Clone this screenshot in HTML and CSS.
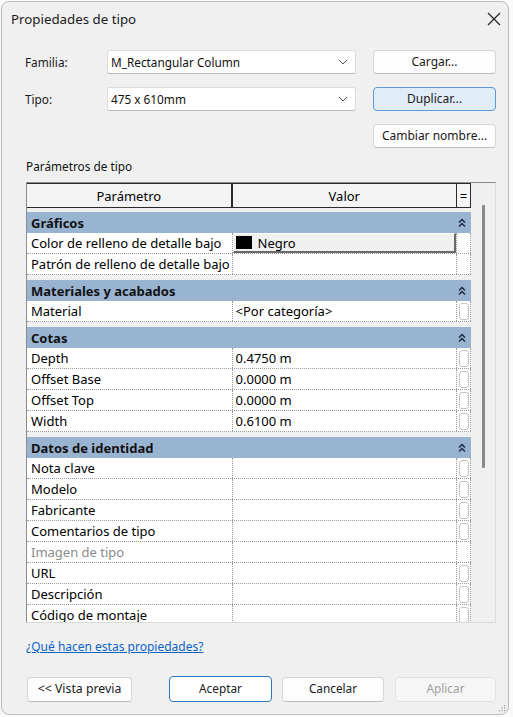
FILE: index.html
```html
<!DOCTYPE html>
<html lang="es">
<head>
<meta charset="utf-8">
<title>Propiedades de tipo</title>
<link rel="stylesheet" href="styles.css">
</head>
<body>
<div class="window">
  <div class="titlebar">
    <span class="title">Propiedades de tipo</span>
    <svg class="close" width="14" height="14" viewBox="0 0 14 14"><path d="M1 1 L13 13 M13 1 L1 13" stroke="#222" stroke-width="1.2" fill="none"/></svg>
  </div>

  <div class="form">
    <span class="lbl">Familia:</span>
    <div class="combo"><span>M_Rectangular Column</span><svg width="10" height="6" viewBox="0 0 10 6"><path d="M1 1 L5 5 L9 1" stroke="#555" stroke-width="1" fill="none"/></svg></div>
    <button class="btn">Cargar...</button>

    <span class="lbl">Tipo:</span>
    <div class="combo"><span>475 x 610mm</span><svg width="10" height="6" viewBox="0 0 10 6"><path d="M1 1 L5 5 L9 1" stroke="#555" stroke-width="1" fill="none"/></svg></div>
    <button class="btn btn-focus">Duplicar...</button>

    <span></span><span></span>
    <button class="btn">Cambiar nombre...</button>
  </div>

  <div class="section-label">Parámetros de tipo</div>

  <div class="table">
    <div class="grid">
      <div class="thead">
        <div class="th c1">Parámetro</div>
        <div class="th c2">Valor</div>
        <div class="th c3">=</div>
      </div>

      <div class="group">
        <div class="ghead"><span>Gráficos</span><svg class="chev" width="8" height="10" viewBox="0 0 8 10"><path d="M1 4.5 L4 1.5 L7 4.5 M1 8.5 L4 5.5 L7 8.5" stroke="#1b2a40" stroke-width="1.5" fill="none"/></svg></div>
        <div class="row"><div class="c1">Color de relleno de detalle bajo</div><div class="c2"><div class="colorbtn"><span class="swatch"></span>Negro</div></div><div class="c3"></div></div>
        <div class="row"><div class="c1">Patrón de relleno de detalle bajo</div><div class="c2"></div><div class="c3"></div></div>
      </div>

      <div class="group">
        <div class="ghead"><span>Materiales y acabados</span><svg class="chev" width="8" height="10" viewBox="0 0 8 10"><path d="M1 4.5 L4 1.5 L7 4.5 M1 8.5 L4 5.5 L7 8.5" stroke="#1b2a40" stroke-width="1.5" fill="none"/></svg></div>
        <div class="row"><div class="c1">Material</div><div class="c2">&lt;Por categoría&gt;</div><div class="c3"><span class="pill"></span></div></div>
      </div>

      <div class="group">
        <div class="ghead"><span>Cotas</span><svg class="chev" width="8" height="10" viewBox="0 0 8 10"><path d="M1 4.5 L4 1.5 L7 4.5 M1 8.5 L4 5.5 L7 8.5" stroke="#1b2a40" stroke-width="1.5" fill="none"/></svg></div>
        <div class="row"><div class="c1">Depth</div><div class="c2">0.4750 m</div><div class="c3"><span class="pill"></span></div></div>
        <div class="row"><div class="c1">Offset Base</div><div class="c2">0.0000 m</div><div class="c3"><span class="pill"></span></div></div>
        <div class="row"><div class="c1">Offset Top</div><div class="c2">0.0000 m</div><div class="c3"><span class="pill"></span></div></div>
        <div class="row"><div class="c1">Width</div><div class="c2">0.6100 m</div><div class="c3"><span class="pill"></span></div></div>
      </div>

      <div class="group">
        <div class="ghead"><span>Datos de identidad</span><svg class="chev" width="8" height="10" viewBox="0 0 8 10"><path d="M1 4.5 L4 1.5 L7 4.5 M1 8.5 L4 5.5 L7 8.5" stroke="#1b2a40" stroke-width="1.5" fill="none"/></svg></div>
        <div class="row"><div class="c1">Nota clave</div><div class="c2"></div><div class="c3"><span class="pill"></span></div></div>
        <div class="row"><div class="c1">Modelo</div><div class="c2"></div><div class="c3"><span class="pill"></span></div></div>
        <div class="row"><div class="c1">Fabricante</div><div class="c2"></div><div class="c3"><span class="pill"></span></div></div>
        <div class="row"><div class="c1">Comentarios de tipo</div><div class="c2"></div><div class="c3"><span class="pill"></span></div></div>
        <div class="row"><div class="c1 disabled">Imagen de tipo</div><div class="c2"></div><div class="c3"></div></div>
        <div class="row"><div class="c1">URL</div><div class="c2"></div><div class="c3"><span class="pill"></span></div></div>
        <div class="row"><div class="c1">Descripción</div><div class="c2"></div><div class="c3"><span class="pill"></span></div></div>
        <div class="row"><div class="c1">Código de montaje</div><div class="c2"></div><div class="c3"><span class="pill"></span></div></div>
      </div>
    </div>
    <div class="scroll"><div class="thumb"></div></div>
  </div>

  <a class="help" href="#">¿Qué hacen estas propiedades?</a>

  <div class="footer">
    <button class="btn">&lt;&lt; Vista previa</button>
    <span class="spacer"></span>
    <button class="btn btn-default">Aceptar</button>
    <button class="btn">Cancelar</button>
    <button class="btn btn-disabled">Aplicar</button>
  </div>

  <svg class="grip" width="7" height="7" viewBox="0 0 7 7"><g fill="#9a9a9a"><rect x="5" y="0" width="1.2" height="1.2"/><rect x="2.5" y="2.5" width="1.2" height="1.2"/><rect x="5" y="2.5" width="1.2" height="1.2"/><rect x="0" y="5" width="1.2" height="1.2"/><rect x="2.5" y="5" width="1.2" height="1.2"/><rect x="5" y="5" width="1.2" height="1.2"/></g></svg>
</div>
</body>
</html>
```

FILE: styles.css
```css
* { box-sizing: border-box; }

html, body {
  margin: 0;
  padding: 0;
  background: #f9f9f9;
}

body {
  font-family: "Noto Sans", "Open Sans", sans-serif;
  font-size: 13px;
  color: #111;
}

.window {
  position: relative;
  margin: 1px 0 0 1px;
  width: 508px;
  height: 714px;
  background: #f0f0f0;
  border: 1px solid #bcbcbc;
  border-radius: 8px;
  display: flex;
  flex-direction: column;
}

.titlebar {
  height: 34px;
  display: flex;
  align-items: center;
  justify-content: space-between;
  padding: 0 7px 0 9px;
}

.title {
  font-size: 13.3px;
  color: #1a1a1a;
}

.close { margin-top: 0; }

.form {
  margin-top: 14px;
  padding-left: 23px;
  display: grid;
  grid-template-columns: 65px 249px 123px;
  grid-template-rows: 24px 24px 24px;
  column-gap: 17px;
  row-gap: 13px;
  align-items: center;
}

.lbl {
  font-size: 11.8px;
  color: #1a1a1a;
}

.combo {
  height: 24px;
  background: #fff;
  border: 1px solid #dcdcdc;
  border-bottom-color: #b8b8b8;
  border-radius: 3px;
  display: flex;
  align-items: center;
  justify-content: space-between;
  padding: 0 7px 0 3px;
  font-size: 11.8px;
}

.btn {
  font-family: inherit;
  font-size: 12px;
  color: #1a1a1a;
  height: 24px;
  background: #fdfdfd;
  border: 1px solid #d6d6d6;
  border-bottom-color: #bcbcbc;
  border-radius: 4px;
  padding: 0;
  line-height: 1;
}

.btn-focus {
  background: #e0ecf8;
  border: 1px solid #5a9ad6;
}

.section-label {
  margin: 10px 0 0 24px;
  line-height: 16px;
  font-size: 11.8px;
}

.table {
  margin: 8px 0 0 24px;
  width: 470px;
  height: 441px;
  border-top: 1px solid #8c8c8c;
  border-left: 1px solid #8c8c8c;
  border-right: 1px solid #dadada;
  border-bottom: 1px solid #dadada;
  display: flex;
  overflow: hidden;
}

.grid {
  width: 445px;
  height: 100%;
  overflow: hidden;
  border-left: 1px solid #2a2a2a;
  margin-left: -1px;
  font-size: 13px;
  color: #000;
}

.thead {
  display: flex;
  height: 25px;
  border-top: 1px solid #2a2a2a;
  border-bottom: 1px solid #2a2a2a;
  background: #f4f4f4;
}

.th {
  display: flex;
  align-items: center;
  justify-content: center;
  border-right: 1px solid #2a2a2a;
}

.thead .c1 { width: 206px; border-right-width: 2px; }
.thead .c2 { width: 225px; }
.thead .c3 { width: 14px; font-size: 13px; }

.group { margin-top: 4px; }
.group + .group { margin-top: 5px; }

.ghead {
  height: 21px;
  background: #99b4d1;
  display: flex;
  align-items: center;
  justify-content: space-between;
  padding: 0 5px 0 4px;
  font-weight: 700;
  color: #111;
}

.chev { margin-top: 1px; }

.row {
  display: flex;
  height: 21px;
  background: #fff;
  border-bottom: 1px dotted #9a9a9a;
}

.row > div {
  display: flex;
  align-items: center;
  border-right: 1px dotted #9a9a9a;
  white-space: nowrap;
  overflow: hidden;
}

.row .c1 { width: 206px; padding-left: 4px; }
.row .c2 { width: 225px; padding-left: 3px; }
.row .c3 { width: 14px; justify-content: center; }

.disabled { color: #8a8a8a; }

.colorbtn {
  margin-left: -3px;
  width: 224px;
  height: 20px;
  background: #f0f0f0;
  border-top: 1px solid #fff;
  border-left: 1px solid #fff;
  border-right: 2px solid #6a6a6a;
  border-bottom: 2px solid #6a6a6a;
  display: flex;
  align-items: center;
  padding-left: 2px;
  font-size: 13px;
}

.swatch {
  width: 16px;
  height: 13px;
  background: #000;
  margin-right: 6px;
}

.pill {
  width: 10px;
  height: 17px;
  border: 1px solid #c4c4c4;
  border-radius: 3px;
  background: #fff;
}

.scroll {
  flex: 1;
  display: flex;
  justify-content: center;
  padding-top: 22px;
  padding-left: 1px;
}

.thumb {
  width: 3px;
  height: 263px;
  background: #8a8a8a;
  border-radius: 1px;
}

.help {
  margin: 16px 0 0 24px;
  line-height: 16px;
  font-size: 12px;
  color: #0a64c8;
  text-decoration: underline;
  align-self: flex-start;
}

.footer {
  margin: 21px 0 0 25px;
  width: 469px;
  display: flex;
  align-items: center;
  gap: 10px;
}

.footer .btn { height: 25px; font-size: 11.8px; }
.footer .btn:nth-child(1) { width: 105px; font-size: 12.3px; }
.footer .btn:nth-child(3) { width: 103px; height: 26px; }
.footer .btn:nth-child(4) { width: 102px; }
.footer .btn:nth-child(5) { width: 101px; margin-left: 1px; }

.spacer { flex: 1; }

.btn-default {
  background: #fff;
  border: 1.5px solid #2f77c0;
}

.btn-disabled {
  background: #f6f6f6;
  border-color: #e2e2e2;
  color: #a0a0a0;
}

.grip {
  position: absolute;
  right: 2px;
  bottom: 2px;
}
```
